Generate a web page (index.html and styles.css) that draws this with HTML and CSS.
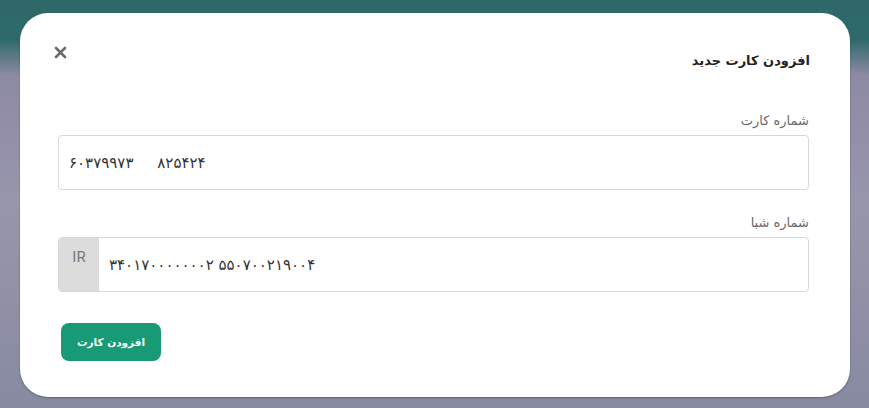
FILE: index.html
```html
<!DOCTYPE html>
<html lang="fa" dir="rtl">
<head>
<meta charset="utf-8">
<link rel="stylesheet" href="styles.css">
</head>
<body>
<div class="backdrop">
  <div class="modal">
    <div class="modal-head">
      <h2 class="modal-title">افزودن کارت جدید</h2>
      <button class="close" aria-label="close">
        <svg width="13" height="13" viewBox="0 0 13 13"><path d="M2 2 L11 11 M11 2 L2 11" stroke="#6b6b6b" stroke-width="2.6" stroke-linecap="round"/></svg>
      </button>
    </div>
    <div class="field">
      <label class="label">شماره کارت</label>
      <div class="input"><span class="value">۶۰۳۷۹۹۷۳&nbsp;&nbsp;&nbsp;&nbsp;&nbsp;۸۲۵۴۲۴</span></div>
    </div>
    <div class="field">
      <label class="label">شماره شبا</label>
      <div class="input group">
        <span class="value">۳۴۰۱۷۰۰۰۰۰۰۰۲ ۵۵۰۷۰۰۲۱۹۰۰۴</span>
        <span class="prefix">IR</span>
      </div>
    </div>
    <div class="actions">
      <button class="btn">افزودن کارت</button>
    </div>
  </div>
</div>
</body>
</html>
```
FILE: styles.css
```css
html, body {
  margin: 0;
  padding: 0;
  height: 100%;
}
body {
  font-family: "DejaVu Sans", "Noto Sans", sans-serif;
  background: linear-gradient(180deg, #2e6869 0px, #2f6a6b 40px, #8d8aa3 75px, #9896ad 200px, #878aa0 408px);
  overflow: hidden;
}
.backdrop {
  padding: 13px 19px 11px 20px;
  height: 408px;
  box-sizing: border-box;
}
.modal {
  background: #fff;
  border-radius: 28px;
  height: 384px;
  box-sizing: border-box;
  padding: 34px 40px 0 38px;
  box-shadow: 0 1px 2px rgba(60,60,80,0.5);
}
.modal-head {
  display: flex;
  justify-content: space-between;
  align-items: center;
  height: 26px;
}
.modal-title {
  margin: 0;
  font-size: 13px;
  font-weight: bold;
  color: #222;
}
.close {
  border: 0;
  background: none;
  padding: 0;
  margin-left: -4px;
  margin-top: -16px;
  display: flex;
  cursor: pointer;
}
.field {
  margin-top: 40px;
}
.field + .field {
  margin-top: 25px;
}
.label {
  display: block;
  font-size: 13px;
  color: #6a6a6a;
  margin-bottom: 7px;
  padding-right: 1px;
}
.input {
  direction: ltr;
  display: flex;
  align-items: center;
  height: 55px;
  border: 1px solid #d8d8d8;
  border-radius: 4px;
  box-sizing: border-box;
  padding-left: 10px;
  margin-right: 1px;
  overflow: hidden;
}
.input.group {
  padding-left: 0;
  flex-direction: row-reverse;
  justify-content: flex-end;
}
.value {
  font-size: 15px;
  color: #333;
  letter-spacing: 0.6px;
}
.prefix {
  direction: ltr;
  align-self: stretch;
  width: 40px;
  background: #dcdcdc;
  color: #777;
  font-family: Roboto, "Liberation Sans", sans-serif;
  font-size: 15px;
  display: flex;
  justify-content: center;
  padding-top: 10px;
  box-sizing: border-box;
  margin-right: 10px;
}
.actions {
  display: flex;
  justify-content: flex-end;
  margin-top: 31px;
  padding-left: 3px;
}
.btn {
  font-family: "DejaVu Sans", sans-serif;
  background: #189a76;
  color: #fff;
  border: 0;
  border-radius: 8px;
  width: 100px;
  height: 38px;
  font-size: 10.5px;
  font-weight: bold;
}
```
